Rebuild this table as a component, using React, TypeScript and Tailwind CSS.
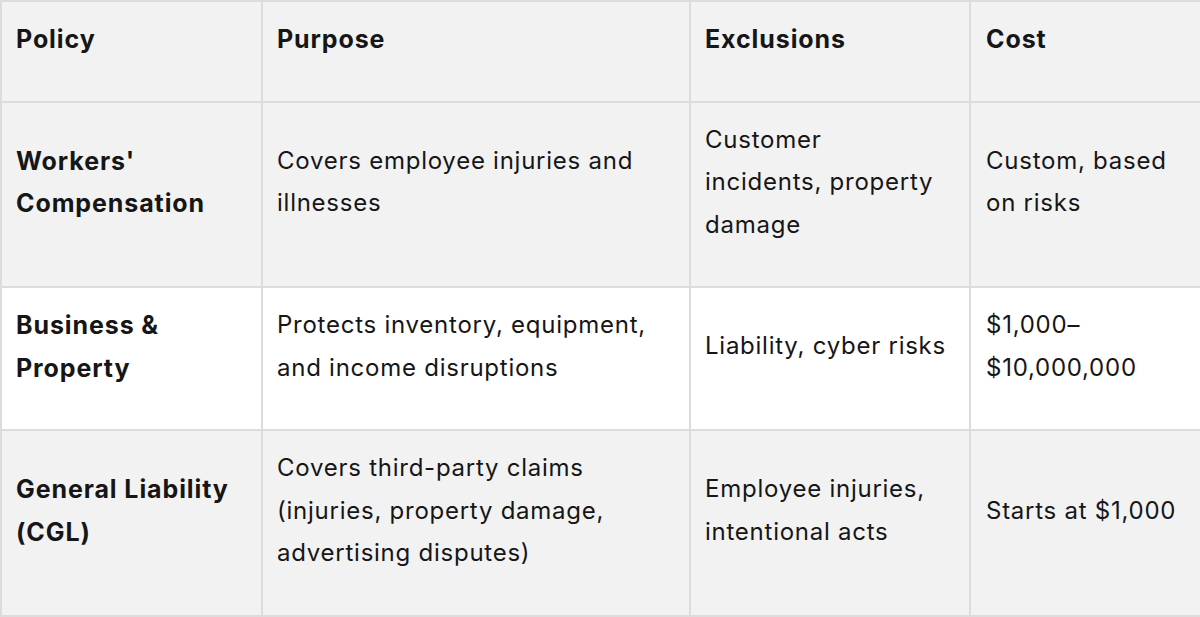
const rows = [
  {
    policy: ["Workers'", 'Compensation'],
    purpose: ['Covers employee injuries and', 'illnesses'],
    exclusions: ['Customer', 'incidents, property', 'damage'],
    cost: ['Custom, based', 'on risks'],
    bg: 'bg-[#f2f2f2]',
  },
  {
    policy: ['Business &', 'Property'],
    purpose: ['Protects inventory, equipment,', 'and income disruptions'],
    exclusions: ['Liability, cyber risks'],
    cost: ['$1,000–', '$10,000,000'],
    bg: 'bg-white',
  },
  {
    policy: ['General Liability', '(CGL)'],
    purpose: ['Covers third-party claims', '(injuries, property damage,', 'advertising disputes)'],
    exclusions: ['Employee injuries,', 'intentional acts'],
    cost: ['Starts at $1,000'],
    bg: 'bg-[#f2f2f2]',
  },
];

const cell = 'border-2 border-[#dcdcdc] pr-[10px] pt-[16px] pb-[40px] align-middle whitespace-nowrap';
const bold = 'font-bold text-[25px] tracking-[0.9px]';
const normal = 'font-normal tracking-[0.75px]';

// lines are fixed so the wraps match the picture
function Lines({ lines }: { lines: string[] }) {
  return (
    <>
      {lines.map((l, i) => (
        <div key={i}>{l}</div>
      ))}
    </>
  );
}

export default function App() {
  return (
    <div className="w-[1200px] h-[617px] overflow-hidden bg-white font-['Inter','Liberation_Sans',sans-serif] text-[24px] leading-[42.5px] text-[#161616]">
      <table className="w-[1200px] table-fixed border-collapse">
        <colgroup>
          <col className="w-[261px]" />
          <col className="w-[428px]" />
          <col className="w-[280px]" />
          <col className="w-[231px]" />
        </colgroup>
        <thead>
          <tr className="bg-[#f2f2f2] text-left">
            <th className={`${cell} ${bold} pl-[14px]`}>Policy</th>
            <th className={`${cell} ${bold} pl-[14px]`}>Purpose</th>
            <th className={`${cell} ${bold} pl-[14px]`}>Exclusions</th>
            <th className={`${cell} ${bold} pl-[15px]`}>Cost</th>
          </tr>
        </thead>
        <tbody>
          {rows.map((r) => (
            <tr key={r.policy[0]} className={r.bg}>
              <td className={`${cell} ${bold} pl-[14px]`}>
                <Lines lines={r.policy} />
              </td>
              <td className={`${cell} ${normal} pl-[14px]`}>
                <Lines lines={r.purpose} />
              </td>
              <td className={`${cell} ${normal} pl-[14px]`}>
                <Lines lines={r.exclusions} />
              </td>
              <td className={`${cell} ${normal} pl-[15px]`}>
                <Lines lines={r.cost} />
              </td>
            </tr>
          ))}
        </tbody>
      </table>
    </div>
  );
}
